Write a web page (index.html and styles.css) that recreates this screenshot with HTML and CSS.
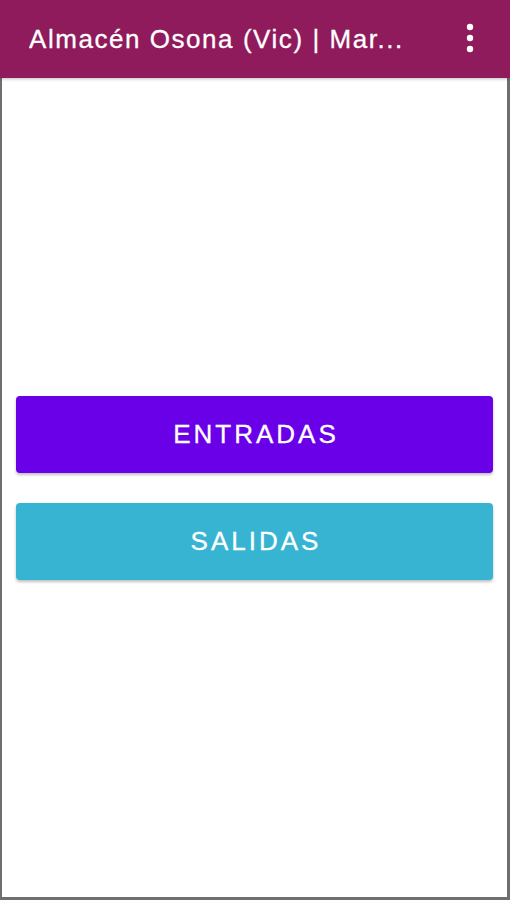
FILE: index.html
```html
<!DOCTYPE html>
<html lang="es">
<head>
<meta charset="utf-8">
<title>Almacén Osona (Vic)</title>
<link rel="stylesheet" href="styles.css">
</head>
<body>
<div class="frame">
  <header class="appbar">
    <h1 class="title">Almacén Osona (Vic) | Mar...</h1>
    <button class="menu" aria-label="Más opciones">
      <svg width="8" height="30" viewBox="0 0 8 30"><circle cx="4" cy="4" r="3.2" fill="#fff"/><circle cx="4" cy="15" r="3.2" fill="#fff"/><circle cx="4" cy="26" r="3.2" fill="#fff"/></svg>
    </button>
  </header>
  <main class="content">
    <button class="btn btn-in">ENTRADAS</button>
    <button class="btn btn-out">SALIDAS</button>
  </main>
</div>
</body>
</html>
```
FILE: styles.css
```css
html, body {
  margin: 0;
  padding: 0;
  height: 100%;
  background: #fff;
  font-family: "Liberation Sans", Arial, sans-serif;
}
.frame {
  box-sizing: border-box;
  height: 900px;
  display: flex;
  flex-direction: column;
  border-left: 2px solid #6f6f6f;
  border-right: 3px solid #6f6f6f;
  border-bottom: 3px solid #6f6f6f;
}
.appbar {
  height: 78px;
  flex: none;
  background: #8f1a5c;
  display: flex;
  align-items: center;
  padding: 0 28px 0 29px;
  margin: 0 -3px 0 -2px;
  box-shadow: 0 1px 3px rgba(0,0,0,0.25);
}
.title {
  flex: 1;
  margin: 0;
  font-size: 26px;
  letter-spacing: 1.55px;
  font-weight: normal;
  color: #fff;
  white-space: nowrap;
  overflow: hidden;
  -webkit-text-stroke: 0.3px #fff;
}
.menu {
  background: none;
  border: none;
  padding: 0;
  margin-right: 8px;
  margin-top: -3px;
  display: flex;
}
.content {
  flex: 1;
  display: flex;
  flex-direction: column;
  justify-content: center;
  gap: 30px;
  padding: 0 14px 0 14px;
}
.btn {
  height: 77px;
  border: none;
  border-radius: 4px;
  color: #fff;
  font-family: "Liberation Sans", Arial, sans-serif;
  font-size: 26px;
  letter-spacing: 3px;
  text-indent: 3px;
  -webkit-text-stroke: 0.3px #fff;
  box-shadow: 0 2px 3px rgba(0,0,0,0.25);
}
.btn-in { background: #6a00e8; }
.btn-out { background: #36b4d2; }
```
